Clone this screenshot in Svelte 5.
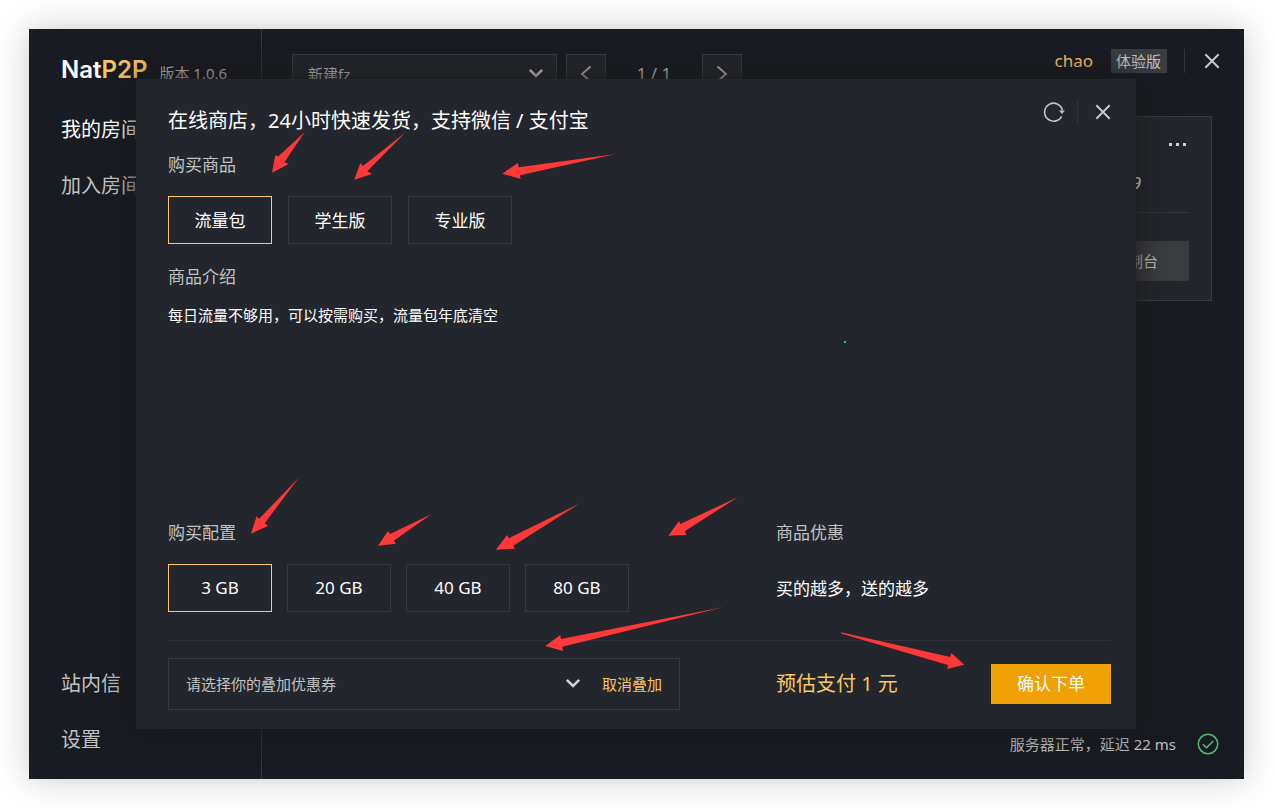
<script>
  const products = ['流量包', '学生版', '专业版'];
  const sizes = ['3 GB', '20 GB', '40 GB', '80 GB'];
  let product = $state(0);
  let size = $state(0);

  const arrows = [
    '305,131.7 278.3,156.5 275.3,155.3 272,172.7 288.7,164 284.3,162.3',
    '405.7,132.3 363,166 360.3,163.3 354.3,179.7 372,174 367.3,171.3',
    '616,154 518.7,167.3 517.7,163 502.3,173.7 520.7,179 519.7,175.3',
    '298.7,477.7 259,519 256.7,516 251,533.7 268,526 264.7,523.3',
    '431.3,514.3 390,534 388,531 378,545.7 396,543.7 393.7,540.7',
    '580,503.3 508.7,538.3 507,535 496,549.7 515,548.7 513.3,545.7',
    '737.7,497.3 680.3,524 679,521 668.3,535.7 686.7,534.7 684.7,531.3',
    '724,607 561,639 560.3,635 545.3,646 563,651 562.3,646.7',
    '841,632.5 842,632.5 950.3,657 951.3,653 964.3,664.7 947.3,669 948,665 841,633.5'
  ];
</script>

{#snippet closeIcon()}
  <svg width="16" height="16" viewBox="0 0 16 16" aria-hidden="true">
    <path d="M1.3 1.3 14.7 14.7M14.7 1.3 1.3 14.7" stroke="#c9c9c9" stroke-width="2" fill="none" />
  </svg>
{/snippet}

{#snippet chevron()}
  <svg class="chevron" width="16" height="12" viewBox="0 0 16 12" aria-hidden="true">
    <path d="M1.8 1.8 8 8 14.2 1.8" stroke="#d0d0d0" stroke-width="2.6" fill="none" />
  </svg>
{/snippet}

<div class="page">
  <div class="window">
    <aside>
      <div class="brand">
        <span class="logo">Nat<b>P2P</b></span>
        <span class="version">版本 1.0.6</span>
      </div>
      <nav>
        <a class="current" href="#rooms">我的房间</a>
        <a href="#join">加入房间</a>
        <a class="push" href="#messages">站内信</a>
        <a href="#settings">设置</a>
      </nav>
    </aside>

    <main>
      <header>
        <div class="rooms">
          <div class="room-select">
            <select aria-label="房间">
              <option>新建fz</option>
            </select>
            {@render chevron()}
          </div>
          <button class="square" aria-label="上一页">
            <svg width="12" height="18" viewBox="0 0 12 18" aria-hidden="true">
              <path d="M10.5 1.5 2 9l8.5 7.5" stroke="#b8b8b8" stroke-width="1.8" fill="none" />
            </svg>
          </button>
          <span class="pages">1 / 1</span>
          <button class="square" aria-label="下一页">
            <svg width="12" height="18" viewBox="0 0 12 18" aria-hidden="true">
              <path d="M1.5 1.5 10 9l-8.5 7.5" stroke="#b8b8b8" stroke-width="1.8" fill="none" />
            </svg>
          </button>
        </div>
        <div class="account">
          <span class="user">chao</span>
          <span class="badge">体验版</span>
          <i class="rule"></i>
          <button class="icon" aria-label="关闭窗口">{@render closeIcon()}</button>
        </div>
      </header>

      <section class="card">
        <button class="more icon" aria-label="更多">
          <svg width="18" height="4" viewBox="0 0 18 4" aria-hidden="true">
            <path d="M0 0h3v3H0zM7 0h3v3H7zM14 0h3v3h-3z" fill="#d0d0d0" />
          </svg>
        </button>
        <p class="count">9</p>
        <div class="card-foot">
          <button class="console">控制台</button>
        </div>
      </section>

      <footer class="status">
        <span>服务器正常，延迟 22 ms</span>
        <svg width="22" height="22" viewBox="0 0 22 22" aria-hidden="true">
          <circle cx="11" cy="11" r="9.7" stroke="#5cb878" stroke-width="1.5" fill="none" />
          <path d="M5.8 11.3 9.5 14.7 16.3 8" stroke="#5cb878" stroke-width="1.5" fill="none" />
        </svg>
      </footer>
    </main>

    <div class="overlay">
      <div class="shop" role="dialog" aria-labelledby="shop-title">
        <div class="head">
          <h1 id="shop-title">在线商店，24小时快速发货，支持微信 / 支付宝</h1>
          <div class="tools">
            <button class="icon" aria-label="刷新">
              <svg width="24" height="24" viewBox="0 0 24 24" aria-hidden="true">
                <path d="M21.4 10.2A9 9 0 1 0 20.6 16.4" stroke="#c4c4c4" stroke-width="1.6" fill="none" />
                <path d="M18 10.5h6L21 14z" fill="#c4c4c4" />
              </svg>
            </button>
            <i class="rule"></i>
            <button class="icon" aria-label="关闭商店">{@render closeIcon()}</button>
          </div>
        </div>

        <h2>购买商品</h2>
        <div class="choices wide">
          {#each products as name, i}
            <button class:on={product === i} aria-pressed={product === i} onclick={() => (product = i)}>{name}</button>
          {/each}
        </div>

        <h2>商品介绍</h2>
        <p class="intro">每日流量不够用，可以按需购买，流量包年底清空</p>

        <div class="columns config">
          <div>
            <h2>购买配置</h2>
            <div class="choices">
              {#each sizes as name, i}
                <button class:on={size === i} aria-pressed={size === i} onclick={() => (size = i)}>{name}</button>
              {/each}
            </div>
          </div>
          <div>
            <h2>商品优惠</h2>
            <p class="offer">买的越多，送的越多</p>
          </div>
        </div>

        <div class="columns pay">
          <div class="coupon">
            <select aria-label="优惠券">
              <option>请选择你的叠加优惠券</option>
            </select>
            {@render chevron()}
            <button class="cancel">取消叠加</button>
          </div>
          <div class="total">
            <span>预估支付 1 元</span>
            <button class="submit">确认下单</button>
          </div>
        </div>
      </div>
    </div>
  </div>

  <svg class="marks" aria-hidden="true">
    {#each arrows as points}
      <polygon {points} fill="#ff3838" />
    {/each}
    <rect x="844" y="341" width="2" height="2" fill="#22d84a" />
  </svg>
</div>

<style>
  :global(body) {
    margin: 0;
    background: #fff;
  }

  * {
    box-sizing: border-box;
  }

  .page {
    position: relative;
    min-height: 100vh;
    display: flex;
    padding: 29px 31px 31px 29px;
    font-family: 'Noto Sans', 'Noto Sans CJK SC', sans-serif;
    font-size: 15px;
    line-height: 24px;
    color: #c2c2c2;
    overflow: hidden;
  }

  .window {
    position: relative;
    flex: 1;
    display: flex;
    background: #191b22;
    box-shadow: 0 0 30px rgba(0, 0, 0, 0.22);
  }

  h1,
  h2,
  p {
    margin: 0;
    font-weight: 400;
  }

  button,
  select {
    margin: 0;
    padding: 0;
    border: 0;
    border-radius: 0;
    background: none;
    font: inherit;
    color: inherit;
    appearance: none;
    outline: none;
  }

  svg {
    display: block;
  }

  .icon {
    display: flex;
  }

  aside {
    display: flex;
    flex-direction: column;
    width: 233px;
    padding: 25px 0 27px 32px;
    border-right: 1px solid #34353a;
  }

  .brand {
    display: flex;
    align-items: center;
    gap: 12px;
    white-space: nowrap;
  }

  .logo {
    font-family: Inter, sans-serif;
    font-size: 24px;
    line-height: 32px;
    font-weight: 600;
    color: #fff;
  }

  .logo b {
    font-weight: 600;
    color: #f9c860;
  }

  .version {
    padding-top: 6px;
  }

  nav {
    flex: 1;
    display: flex;
    flex-direction: column;
    gap: 32px;
    margin-top: 32px;
    font-size: 20px;
  }

  nav a {
    color: inherit;
    text-decoration: none;
  }

  nav .current {
    color: #fff;
  }

  nav .push {
    margin-top: auto;
  }

  main {
    flex: 1;
    display: flex;
    flex-direction: column;
    padding: 20px 24px 24px 30px;
  }

  header {
    display: flex;
    justify-content: space-between;
    align-items: flex-start;
  }

  .rooms {
    display: flex;
    align-items: center;
    margin-top: 5px;
  }

  .room-select {
    display: flex;
    align-items: center;
    width: 265px;
    height: 40px;
    margin-right: 9px;
    padding: 0 12px 0 15px;
    border: 1px solid #3a3b3e;
    background: #24262d;
  }

  .room-select select,
  .coupon select {
    flex: 1;
    min-width: 0;
    height: 100%;
  }

  .square {
    display: grid;
    place-items: center;
    width: 40px;
    height: 40px;
    border: 1px solid #3a3b3e;
    background: #24262d;
  }

  .pages {
    width: 96px;
    text-align: center;
    font-size: 17px;
  }

  .account {
    display: flex;
    align-items: center;
  }

  .user {
    font-size: 17px;
    color: #f9c860;
  }

  .badge {
    margin: 0 17px 0 18px;
    padding: 0 6px 0 5px;
    background: #3b3c40;
  }

  .rule {
    width: 1px;
    height: 24px;
    background: #34353a;
  }

  .account .rule {
    margin-right: 19px;
  }

  .card {
    display: flex;
    flex-direction: column;
    align-self: flex-end;
    width: 290px;
    margin: 22px 8px 0 0;
    padding: 22px;
    padding-bottom: 19px;
    border: 1px solid #3a3b3e;
    background: #24262d;
  }

  .more {
    align-self: flex-end;
    margin: 4px 2px 0 0;
  }

  .count {
    margin-top: 24px;
    padding-right: 48px;
    text-align: right;
    font-size: 17px;
    font-style: italic;
    color: #fff;
  }

  .card-foot {
    display: flex;
    justify-content: flex-end;
    margin-top: 17px;
    padding-top: 28px;
    border-top: 1px solid #34353a;
  }

  .console {
    height: 40px;
    padding: 0 31px;
    background: #3b3c40;
  }

  .status {
    display: flex;
    justify-content: flex-end;
    align-items: center;
    gap: 21px;
    height: 22px;
    margin-top: auto;
    padding-right: 1px;
  }

  .overlay {
    position: absolute;
    inset: 0;
    display: flex;
    padding: 50px 108px 50px 107px;
  }

  .shop {
    flex: 1;
    display: flex;
    flex-direction: column;
    padding: 21px 25px 19px 32px;
    background: #24262d;
    box-shadow: 0 0 30px #191919;
  }

  .head {
    display: flex;
    justify-content: space-between;
    align-items: flex-start;
  }

  h1 {
    padding-top: 9px;
    font-size: 20px;
    line-height: 24px;
    color: #fff;
  }

  .tools {
    display: flex;
    align-items: center;
  }

  .tools .rule {
    margin: 0 17px 0 12px;
  }

  h2 {
    margin-top: 20px;
    font-size: 17px;
    line-height: 24px;
  }

  .choices {
    display: flex;
    gap: 15px;
    margin-top: 19px;
  }

  .choices.wide {
    gap: 16px;
  }

  .choices button {
    width: 104px;
    height: 48px;
    border: 1px solid #3a3b3e;
    font-size: 17px;
    color: #fff;
  }

  .choices.wide button {
    padding-top: 1px;
  }

  .choices .on {
    border-color: #ffc860;
  }

  .wide + h2 {
    margin-top: 21px;
  }

  .intro {
    margin-top: 14px;
    color: #fff;
  }

  .columns {
    display: grid;
    grid-template-columns: 608fr 335fr;
  }

  .config {
    margin-top: auto;
  }

  .offer {
    margin-top: 32px;
    font-size: 17px;
    color: #fff;
  }

  .pay {
    margin-top: 28px;
    padding-top: 17px;
    border-top: 1px solid #303238;
  }

  .coupon {
    display: flex;
    align-items: center;
    height: 52px;
    margin-right: 96px;
    padding: 0 17px;
    border: 1px solid #3a3b3e;
  }

  .cancel {
    margin-left: 21px;
    color: #f9c860;
  }

  .total {
    display: flex;
    justify-content: space-between;
    align-items: center;
    font-size: 20px;
    color: #f9c860;
  }

  .submit {
    width: 120px;
    height: 40px;
    background: #eea005;
    font-size: 17px;
    color: #fff;
  }

  .marks {
    position: absolute;
    top: 0;
    left: 0;
    width: 100%;
    height: 100%;
    pointer-events: none;
  }
</style>
